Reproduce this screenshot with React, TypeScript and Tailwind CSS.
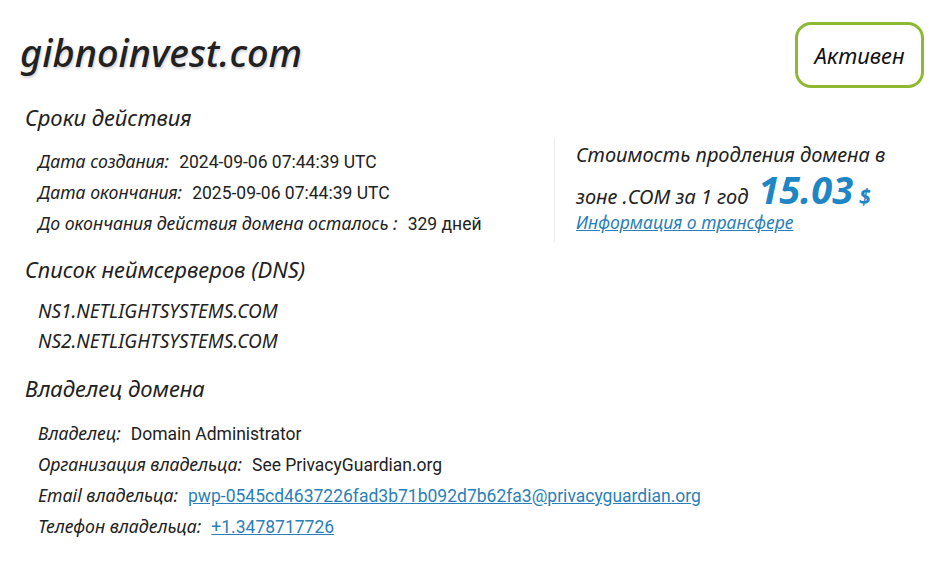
import React from "react";

const font = { fontFamily: '"Noto Sans", "Open Sans", sans-serif' };

const Row = ({ name, children }: { name: string; children: React.ReactNode }) => (
    <div className="flex items-baseline h-[31px] leading-[31px]">
        <span className="italic text-[#222] text-[17.7px]">{name}</span>
        <span className="ml-[10px] text-[17.5px] text-[#222] font-['Roboto',sans-serif]">{children}</span>
    </div>
);

const Heading = ({ children }: { children: React.ReactNode }) => (
    <h2 className="italic text-[22px] text-[#222] pl-[25px] leading-[30px]">{children}</h2>
);

export default function App() {
    return (
        <div className="w-[945px] h-[563px] bg-white overflow-hidden" style={font}>
            <div className="flex justify-between items-start pl-[20px] pr-[21px] pt-[22px]">
                <h1 className="italic font-medium text-[38px] leading-[60px] text-[#222] [text-shadow:1px_2px_3px_rgba(0,0,0,0.18)]">
                    gibnoinvest.com
                </h1>
                <div className="w-[129px] h-[66px] border-[3px] border-[#8cb832] rounded-[16px] flex items-center justify-center italic text-[22px] text-[#111]">
                    Активен
                </div>
            </div>

            <div className="mt-[14px]">
                <Heading>Сроки действия</Heading>
                <div className="flex mt-[14px]">
                    <div className="w-[554px] pl-[38px]">
                        <Row name="Дата создания:">2024-09-06 07:44:39 UTC</Row>
                        <Row name="Дата окончания:">2025-09-06 07:44:39 UTC</Row>
                        <Row name="До окончания действия домена осталось :">329 дней</Row>
                    </div>
                    <div className="border-l border-[#ececec] pl-[21px] -mt-[8px] h-[104px]">
                        <div className="italic text-[20px] text-[#222] leading-[34px] h-[34px]">Стоимость продления домена в</div>
                        <div className="italic text-[20px] text-[#222] leading-[34px] h-[34px] flex items-baseline">
                            зоне .COM за 1 год
                            <span className="ml-[10px] text-[38px] font-bold text-[#1f86c6] leading-[34px]">15.03</span>
                            <span className="ml-[6px] text-[21px] font-bold text-[#1f86c6]">$</span>
                        </div>
                        <a className="italic text-[17.6px] text-[#2a7fb8] underline leading-[32px] block" href="#">
                            Информация о трансфере
                        </a>
                    </div>
                </div>
            </div>

            <div className="mt-[12px]">
                <Heading>Список неймсерверов (DNS)</Heading>
                <div className="pl-[38px] mt-[12px] italic text-[19px] text-[#222]">
                    <div className="h-[30px] leading-[30px]">NS1.NETLIGHTSYSTEMS.COM</div>
                    <div className="h-[30px] leading-[30px]">NS2.NETLIGHTSYSTEMS.COM</div>
                </div>
            </div>

            <div className="mt-[17px]">
                <Heading>Владелец домена</Heading>
                <div className="pl-[38px] mt-[15px]">
                    <Row name="Владелец:">Domain Administrator</Row>
                    <Row name="Организация владельца:">See PrivacyGuardian.org</Row>
                    <Row name="Email владельца:">
                        <a className="text-[#2a7fb8] underline" href="#">pwp-0545cd4637226fad3b71b092d7b62fa3@privacyguardian.org</a>
                    </Row>
                    <Row name="Телефон владельца:">
                        <a className="text-[#2a7fb8] underline" href="#">+1.3478717726</a>
                    </Row>
                </div>
            </div>
        </div>
    );
}
